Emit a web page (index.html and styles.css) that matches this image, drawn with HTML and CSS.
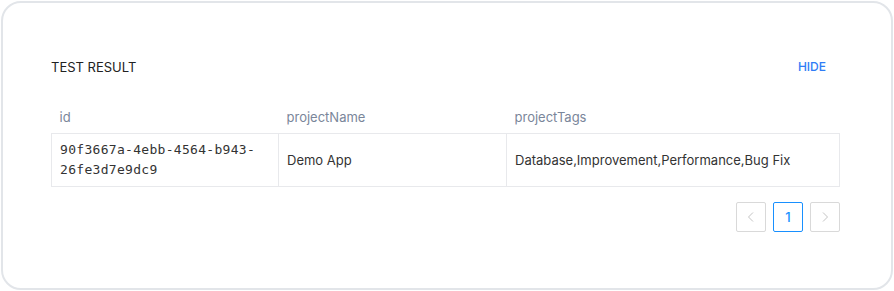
FILE: index.html
```html
<!DOCTYPE html>
<html>
    <head>
        <title>Test Result</title>
        <link rel="stylesheet" href="styles.css">
    </head>
    <body>
        <div class="card">
            <div class="card-head">
                <h2 class="title">TEST RESULT</h2>
                <a class="hide-link" href="#">HIDE</a>
            </div>
            <table class="result">
                <thead>
                    <tr>
                        <th class="col-id">id</th>
                        <th class="col-name">projectName</th>
                        <th>projectTags</th>
                    </tr>
                </thead>
                <tbody>
                    <tr>
                        <td class="mono">90f3667a-4ebb-4564-b943-26fe3d7e9dc9</td>
                        <td>Demo App</td>
                        <td>Database,Improvement,Performance,Bug Fix</td>
                    </tr>
                </tbody>
            </table>
            <div class="pager">
                <button class="pg disabled" aria-label="Previous">
                    <svg width="12" height="12" viewBox="0 0 12 12"><path d="M8 1.5 3.5 6 8 10.5" fill="none" stroke="currentColor" stroke-width="1"/></svg>
                </button>
                <button class="pg active">1</button>
                <button class="pg disabled" aria-label="Next">
                    <svg width="12" height="12" viewBox="0 0 12 12"><path d="M4 1.5 8.5 6 4 10.5" fill="none" stroke="currentColor" stroke-width="1"/></svg>
                </button>
            </div>
        </div>
    </body>
</html>
```
FILE: styles.css
```css
* {
    margin: 0;
    padding: 0;
    box-sizing: border-box;
}
body {
    font-family: Inter, "Noto Sans", sans-serif;
    background-color: #fff;
    color: #333;
}
.card {
    margin: 1px;
    height: 289px;
    border: 2px solid #e2e5e9;
    border-radius: 20px;
    padding: 55px 51px 0 48px;
}
.card-head {
    display: flex;
    justify-content: space-between;
    align-items: center;
    padding-right: 14px;
}
.title {
    font-size: 13px;
    font-weight: 400;
    line-height: 18px;
    color: #222;
}
.hide-link {
    font-size: 12px;
    font-weight: 500;
    line-height: 18px;
    color: #2f7cf6;
    text-decoration: none;
}
.result {
    width: 100%;
    margin-top: 29px;
    border-collapse: collapse;
    font-size: 13px;
}
.result th {
    text-align: left;
    font-weight: 400;
    color: #7a869a;
    line-height: 18px;
    padding: 3px 8px 7px;
}
.col-id {
    width: 227px;
}
.col-name {
    width: 228px;
}
.result td {
    border: 1px solid #e8e9ec;
    padding: 6px 8px;
    line-height: 20px;
    color: #333;
    vertical-align: middle;
}
.result td.mono {
    font-family: "DejaVu Sans Mono", monospace;
    font-size: 13px;
    letter-spacing: 0.3px;
}
.pager {
    display: flex;
    justify-content: flex-end;
    gap: 7px;
    margin-top: 15px;
}
.pg {
    width: 30px;
    height: 30px;
    border: 1px solid #d9d9d9;
    border-radius: 2px;
    background: #fff;
    color: #c4c4c4;
    font-family: Inter, sans-serif;
    font-size: 13px;
    font-weight: 500;
    display: flex;
    align-items: center;
    justify-content: center;
}
.pg.active {
    border-color: #1890ff;
    color: #1890ff;
}
```
